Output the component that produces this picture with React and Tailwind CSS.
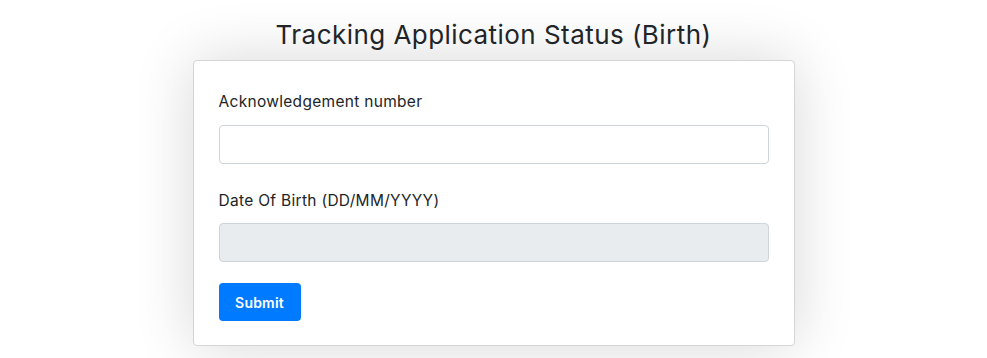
export default function App() {
  return (
    <div className="min-h-[358px] bg-white font-['Inter',sans-serif] text-[#212529]">
      <h1 className="pt-[17px] mb-[7px] text-center text-[26px] leading-[36px] font-normal tracking-[0.45px]">
        Tracking Application Status (Birth)
      </h1>

      <div className="mx-auto w-[602px] rounded-[4px] border border-[#d5d5d5] bg-white px-[25px] pt-[29px] pb-[24px] shadow-[0_0_60px_rgba(0,0,0,0.16)]">
        <label className="block text-[15.5px] leading-[24px] mb-[11px] tracking-[0.3px]">Acknowledgement number</label>
        <input
          className="block h-[39px] w-full rounded-[4px] border border-[#ced4da] bg-white px-3"
          type="text"
        />

        <label className="mt-[25px] block text-[15.5px] leading-[24px] mb-[10px] tracking-[0.3px]">Date Of Birth (DD/MM/YYYY)</label>
        <input
          className="block h-[39px] w-full rounded-[4px] border border-[#ced4da] bg-[#e9ecef] px-3"
          type="text"
          disabled
        />

        <button
          className="mt-[21px] h-[38px] w-[82px] rounded-[4px] bg-[#007bff] text-[14px] font-semibold tracking-[0.2px] text-white"
          type="button"
        >
          Submit
        </button>
      </div>
    </div>
  );
}
